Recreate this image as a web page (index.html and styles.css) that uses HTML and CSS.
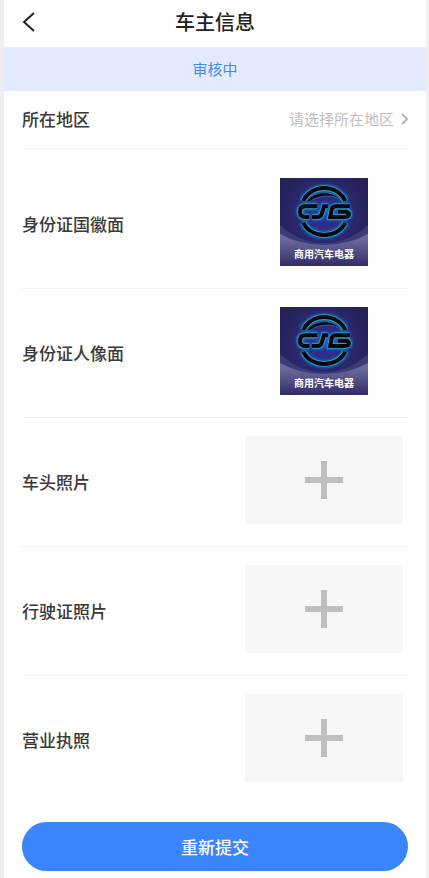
FILE: index.html
```html
<!DOCTYPE html>
<html lang="zh-CN">
<head>
<meta charset="utf-8">
<meta name="viewport" content="width=device-width, initial-scale=1">
<title>车主信息</title>
<link rel="stylesheet" href="styles.css">
</head>
<body>
<svg class="defs" aria-hidden="true">
  <defs>
    <radialGradient id="night" cx="50%" cy="42%" r="65%">
      <stop offset="0" stop-color="#30309a"/>
      <stop offset="0.55" stop-color="#29266b"/>
      <stop offset="1" stop-color="#251f50"/>
    </radialGradient>
    <linearGradient id="wave" x1="0" y1="0" x2="0" y2="1">
      <stop offset="0" stop-color="#74729f"/>
      <stop offset="0.5" stop-color="#55528a"/>
      <stop offset="1" stop-color="#302b66"/>
    </linearGradient>
    <filter id="glow" x="-20%" y="-20%" width="140%" height="140%">
      <feGaussianBlur stdDeviation="4"/>
    </filter>
    <g id="emblem" fill="none">
      <path d="M88 86A67 59 0 0 1 214 86"/>
      <path d="M88 151A67 56 0 0 0 214 151"/>
      <path d="M130 102H94Q78 102 78 118Q78 134 94 134H106"/>
      <path d="M114 134H130Q140 134 143 125L150 102H162"/>
      <path d="M228 102H186Q175 102 173 112L169 134H212Q225 134 225 126Q225 118 214 118H192"/>
    </g>
    <symbol id="photo" viewBox="0 0 88 88">
      <rect width="88" height="88" fill="url(#night)"/>
      <path d="M0 47Q20 65 44 65T88 47V88H0Z" fill="#3d3a78"/>
      <path d="M0 56Q20 67 44 67T88 56V88H0Z" fill="url(#wave)"/>
      <g transform="translate(-6 -5.6) scale(.333)">
        <use href="#emblem" stroke="#1683c8" stroke-width="20" filter="url(#glow)"/>
        <use href="#emblem" stroke="#2a9fc4" stroke-width="17"/>
        <use href="#emblem" stroke="#03060f" stroke-width="12"/>
        <path d="M96 88Q118 59 158 61Q188 66 206 87Q186 70 158 71Q126 72 108 88Z" fill="#03060f" stroke="#2789b4" stroke-width="2"/>
      </g>
      <text class="photo-caption" x="44" y="80" text-anchor="middle">商用汽车电器</text>
    </symbol>
  </defs>
</svg>
<div class="page">
  <header class="header">
    <button class="back" type="button" aria-label="返回">
      <svg viewBox="0 0 13 20" width="13" height="20"><path d="M12 1L2 10L12 19"/></svg>
    </button>
    <h1 class="title">车主信息</h1>
  </header>
  <p class="status">审核中</p>
  <form class="form">
    <div class="row row-region">
      <label class="label" for="region">所在地区</label>
      <select class="region" id="region">
        <option>请选择所在地区</option>
      </select>
      <svg class="chevron" viewBox="0 0 8 12" width="8" height="12" aria-hidden="true"><path d="M2 1L7 6L2 11"/></svg>
    </div>
    <div class="uploads">
      <div class="row">
        <span class="label" id="emblem-side">身份证国徽面</span>
        <button class="tile tile-photo" type="button" aria-labelledby="emblem-side"><svg class="photo"><use href="#photo"/></svg></button>
      </div>
      <div class="row">
        <span class="label" id="portrait-side">身份证人像面</span>
        <button class="tile tile-photo" type="button" aria-labelledby="portrait-side"><svg class="photo"><use href="#photo"/></svg></button>
      </div>
      <div class="row">
        <span class="label" id="truck-front">车头照片</span>
        <button class="tile" type="button" aria-labelledby="truck-front"><svg class="plus" viewBox="0 0 38 38"><path d="M19 0V38M0 19H38"/></svg></button>
      </div>
      <div class="row">
        <span class="label" id="vehicle-license">行驶证照片</span>
        <button class="tile" type="button" aria-labelledby="vehicle-license"><svg class="plus" viewBox="0 0 38 38"><path d="M19 0V38M0 19H38"/></svg></button>
      </div>
      <div class="row">
        <span class="label" id="business-license">营业执照</span>
        <button class="tile" type="button" aria-labelledby="business-license"><svg class="plus" viewBox="0 0 38 38"><path d="M19 0V38M0 19H38"/></svg></button>
      </div>
    </div>
    <button class="submit" type="submit">重新提交</button>
  </form>
</div>
</body>
</html>
```
FILE: styles.css
```css
* {
  box-sizing: border-box;
}

body {
  margin: 0;
  background: #efefef;
  color: #3a3a3a;
  font-family: "Noto Sans CJK SC", sans-serif;
}

button,
select {
  margin: 0;
  padding: 0;
  border: 0;
  background: none;
  font-family: inherit;
}

.defs {
  position: absolute;
  width: 0;
  height: 0;
}

.page {
  min-height: 100vh;
  margin: 0 3px 0 4px;
  background: #fff;
}

.header {
  display: grid;
  grid-template-columns: 48px 1fr 48px;
  align-items: center;
  height: 47px;
  padding-bottom: 4px;
}

.back {
  display: flex;
  padding-left: 18px;
}

.back svg {
  fill: none;
  stroke: #222;
  stroke-width: 2;
}

.title {
  margin: 0;
  color: #222;
  font-size: 20px;
  font-weight: 500;
  line-height: 28px;
  text-align: center;
}

.status {
  margin: 0;
  background: #e4ebff;
  color: #4589f5;
  font-size: 15px;
  line-height: 44px;
  text-align: center;
}

.form {
  padding: 0 18px 7px;
}

.row {
  display: flex;
  align-items: center;
  justify-content: space-between;
  padding: 18px 0;
  border-bottom: 1px solid #f2f2f2;
}

.row:last-child {
  border-bottom: 0;
}

.row-region {
  gap: 6px;
  height: 58px;
  padding: 0 0 2px;
}

.label {
  font-size: 17px;
  font-weight: 500;
  line-height: 24px;
}

.region {
  flex: 1;
  appearance: none;
  color: #bfbfbf;
  font-size: 15px;
  line-height: 24px;
  text-align-last: right;
}

.chevron {
  fill: none;
  stroke: #b5b5b5;
  stroke-width: 2;
}

.uploads {
  padding-top: 11px;
}

.tile {
  display: flex;
  align-items: center;
  justify-content: center;
  width: 158px;
  height: 88px;
  margin: 0 5px 4px 0;
  border-radius: 2px;
  background: #f7f7f7;
}

.tile-photo {
  background: none;
}

.photo {
  width: 88px;
  height: 88px;
}

.photo-caption {
  fill: #fff;
  font-size: 10px;
  font-weight: 700;
}

.plus {
  width: 38px;
  height: 38px;
  stroke: #bfbfbf;
  stroke-width: 6;
}

.submit {
  display: block;
  width: 100%;
  height: 49px;
  margin-top: 18px;
  border-radius: 25px;
  background: #3985f9;
  color: #fff;
  font-size: 17px;
  font-weight: 500;
}
```
